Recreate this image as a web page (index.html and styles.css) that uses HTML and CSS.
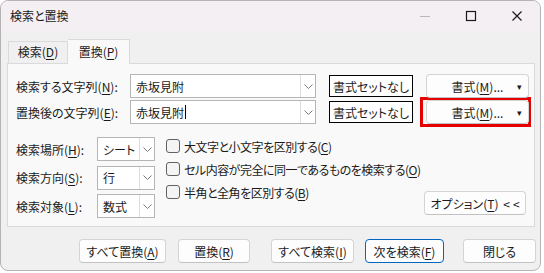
FILE: index.html
```html
<!DOCTYPE html>
<html lang="ja">
<head>
  <meta charset="UTF-8" />
  <title>検索と置換</title>
  <link rel="stylesheet" href="styles.css">
</head>
<body>

  <div class="window">
    <div class="titlebar">
      <span class="title">検索と置換</span>
      <div class="controls">
        <span class="ctl">
          <svg width="12" height="12" viewBox="0 0 12 12"><line x1="1" y1="6.5" x2="11" y2="6.5" stroke="#b8b8b8" stroke-width="1"/></svg>
        </span>
        <span class="ctl">
          <svg width="12" height="12" viewBox="0 0 12 12"><rect x="1.5" y="1.5" width="9" height="9" fill="none" stroke="#1a1a1a" stroke-width="1.2"/></svg>
        </span>
        <span class="ctl">
          <svg width="12" height="12" viewBox="0 0 12 12"><path d="M1.5 1.5 L10.5 10.5 M10.5 1.5 L1.5 10.5" stroke="#1a1a1a" stroke-width="1.2"/></svg>
        </span>
      </div>
    </div>

    <div class="tabs">
      <div class="tab">検索(<u>D</u>)</div>
      <div class="tab active">置換(<u>P</u>)</div>
    </div>

    <div class="panel">
      <div class="find-grid">
        <label class="lbl">検索する文字列(<u>N</u>):</label>
        <div class="combo">
          <span class="combo-text">赤坂見附</span>
          <span class="drop"><svg width="9" height="5" viewBox="0 0 9 5"><polyline points="0.5,0.5 4.5,4.5 8.5,0.5" fill="none" stroke="#7a7a7a"/></svg></span>
        </div>
        <button class="btn-plain">書式セットなし</button>
        <div class="format-cell">
          <button class="btn btn-format"><span>書式(<u>M</u>)...</span><span class="caret">▾</span></button>
        </div>

        <label class="lbl">置換後の文字列(<u>E</u>):</label>
        <div class="combo">
          <span class="combo-text">赤坂見附<span class="cursor"></span></span>
          <span class="drop"><svg width="9" height="5" viewBox="0 0 9 5"><polyline points="0.5,0.5 4.5,4.5 8.5,0.5" fill="none" stroke="#7a7a7a"/></svg></span>
        </div>
        <button class="btn-plain">書式セットなし</button>
        <div class="format-cell marked">
          <button class="btn btn-format"><span>書式(<u>M</u>)...</span><span class="caret">▾</span></button>
        </div>
      </div>

      <div class="options">
        <div class="select-grid">
          <label class="lbl">検索場所(<u>H</u>):</label>
          <div class="select"><span>シート</span><span class="drop"><svg width="9" height="5" viewBox="0 0 9 5"><polyline points="0.5,0.5 4.5,4.5 8.5,0.5" fill="none" stroke="#7a7a7a"/></svg></span></div>
          <label class="lbl">検索方向(<u>S</u>):</label>
          <div class="select"><span>行</span><span class="drop"><svg width="9" height="5" viewBox="0 0 9 5"><polyline points="0.5,0.5 4.5,4.5 8.5,0.5" fill="none" stroke="#7a7a7a"/></svg></span></div>
          <label class="lbl">検索対象(<u>L</u>):</label>
          <div class="select"><span>数式</span><span class="drop"><svg width="9" height="5" viewBox="0 0 9 5"><polyline points="0.5,0.5 4.5,4.5 8.5,0.5" fill="none" stroke="#7a7a7a"/></svg></span></div>
        </div>

        <div class="checks">
          <label class="check"><span class="box"></span>大文字と小文字を区別する(<u>C</u>)</label>
          <label class="check"><span class="box"></span>セル内容が完全に同一であるものを検索する(<u>O</u>)</label>
          <label class="check"><span class="box"></span>半角と全角を区別する(<u>B</u>)</label>
        </div>

        <button class="btn btn-options">オプション(<u>T</u>) <span class="chev">&lt;&lt;</span></button>
      </div>
    </div>

    <div class="actions">
      <button class="btn act-replace-all">すべて置換(<u>A</u>)</button>
      <button class="btn act-replace">置換(<u>R</u>)</button>
      <button class="btn act-find-all">すべて検索(<u>I</u>)</button>
      <button class="btn act-find-next">次を検索(<u>F</u>)</button>
      <button class="btn act-close">閉じる</button>
    </div>
  </div>

</body>
</html>
```

FILE: styles.css
```css
* {
  box-sizing: border-box;
  margin: 0;
  padding: 0;
}
html, body {
  width: 100%;
  height: 100%;
}
body {
  background: #ffffff;
  font-family: "Noto Sans CJK JP", "Noto Sans", sans-serif;
  font-size: 12px;
  font-feature-settings: "palt";
  color: #1a1a1a;
}
u {
  text-underline-offset: 2px;
}
button {
  font: inherit;
  font-feature-settings: "palt";
  color: inherit;
  padding: 0;
  white-space: nowrap;
  cursor: default;
}
.window {
  width: 541px;
  height: 271px;
  background: #f0f0f0;
  border: 1px solid #b4b4b4;
  border-radius: 8px;
  overflow: hidden;
}

/* title bar */
.titlebar {
  height: 31px;
  display: flex;
  align-items: center;
  justify-content: space-between;
  background: #f3eff3;
  padding-left: 9px;
}
.title {
  line-height: 14px;
  margin-top: -2px;
}
.controls {
  display: flex;
  height: 100%;
}
.ctl {
  width: 46px;
  display: flex;
  align-items: center;
  justify-content: center;
  margin-top: -2px;
}

/* tabs */
.tabs {
  display: flex;
  align-items: flex-end;
  height: 31px;
  padding-left: 7px;
}
.tab {
  height: 22px;
  line-height: 20px;
  border: 1px solid #dadada;
  border-bottom: none;
  width: 60px;
  text-align: center;
}
.tab.active {
  height: 25px;
  width: 62px;
  line-height: 24px;
  background: #f9f9f9;
  border-left: none;
  margin-bottom: -1px;
}

.panel {
  margin: 0 5px 0 6px;
  height: 164px;
  background: #f9f9f9;
  border: 1px solid #dadada;
  padding: 10px 8px 7px 8px;
}

/* find / replace rows */
.find-grid {
  display: grid;
  grid-template-columns: 114px 186px 97px 114px;
  grid-auto-rows: 24px;
  row-gap: 2px;
  align-items: center;
}
.lbl {
  white-space: nowrap;
}
.combo,
.select {
  height: 24px;
  display: flex;
  align-items: center;
  background: #fff;
  border: 1px solid #b5b5b5;
}
.combo-text {
  flex: 1;
  padding-left: 5px;
  display: flex;
  align-items: center;
}
.cursor {
  display: inline-block;
  width: 1px;
  height: 14px;
  background: #000;
  margin-left: 1px;
}
.drop {
  width: 15px;
  height: 22px;
  border-left: 1px solid #dcdcdc;
  display: flex;
  align-items: center;
  justify-content: center;
  background: #fff;
}
.btn-plain {
  height: 22px;
  width: 84px;
  justify-self: end;
  background: #fff;
  border: 1px solid #000;
}
.btn {
  height: 24px;
  background: #fdfdfd;
  border: 1px solid #d4d4d4;
  border-bottom-color: #c2c2c2;
  border-radius: 4px;
}
.format-cell {
  justify-self: end;
  width: 111px;
  height: 30px;
  margin-right: -4px;
  padding: 3px 4px;
  border: 3px solid transparent;
  display: flex;
  align-items: center;
}
.format-cell.marked {
  border-color: #e60000;
}
.btn-format {
  width: 103px;
  flex: none;
  margin: 0 -1px;
  display: flex;
  align-items: center;
  justify-content: center;
  position: relative;
}
.caret {
  position: absolute;
  right: 6px;
  font-size: 9px;
}

/* options */
.options {
  display: flex;
  margin-top: 13px;
}
.select-grid {
  display: grid;
  grid-template-columns: 81px 58px;
  grid-auto-rows: 24px;
  row-gap: 4.5px;
  align-items: center;
}
.select span:first-child {
  flex: 1;
  padding-left: 5px;
}
.checks {
  display: flex;
  flex-direction: column;
  gap: 9px;
  margin-left: 11px;
  padding-top: 2px;
}
.check {
  display: flex;
  align-items: center;
  height: 14px;
  white-space: nowrap;
  letter-spacing: -0.5px;
}
.box {
  width: 14px;
  height: 14px;
  border: 1px solid #616161;
  border-radius: 3px;
  background: #f4f4f4;
  margin-right: 4px;
}
.btn-options {
  align-self: flex-end;
  margin-left: auto;
  width: 102px;
  flex: none;
  height: 24px;
  margin-bottom: 3px;
}
.chev {
  letter-spacing: 3px;
  margin-left: 2px;
  margin-right: -3px;
}

/* bottom buttons */
.actions {
  display: flex;
  margin-top: 12px;
  padding-left: 78px;
}
.act-replace-all { width: 87px; }
.act-replace { width: 72px; margin-left: 12px; }
.act-find-all { width: 83px; margin-left: 21px; }
.act-find-next {
  width: 79px;
  margin-left: 11px;
  border: 1px solid #0067c0;
}
.act-close { width: 73px; margin-left: 19px; }
```
